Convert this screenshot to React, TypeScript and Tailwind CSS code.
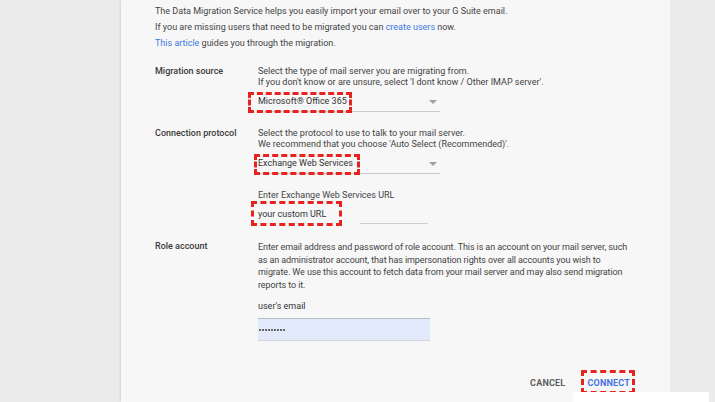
import React from 'react';

const font = { fontFamily: 'Roboto, "Liberation Sans", sans-serif' };

function RedBox({ className }: { className: string }) {
  return <span className={`pointer-events-none absolute border-[3px] border-dashed border-[#e8231f] ${className}`} />;
}

function Row({ label, children, className = '' }: { label: string; children: React.ReactNode; className?: string }) {
  return (
    <div className={`flex ${className}`}>
      <div className="w-[103px] shrink-0 font-medium text-[#3a3a3a] leading-[11px]">{label}</div>
      <div className="flex-1">{children}</div>
    </div>
  );
}

function Select({ value, box }: { value: string; box: string }) {
  return (
    <div className="relative flex h-[20px] w-[182px] items-center justify-between border-b border-[#c9c9c9] text-[#333]">
      <span className="leading-[11px]">{value}</span>
      <span className="mr-[3px] h-0 w-0 border-x-[4px] border-t-[4px] border-x-transparent border-t-[#a0a0a0]" />
      <RedBox className={box} />
    </div>
  );
}

export default function App() {
  return (
    <div className="relative flex h-[402px] w-[715px] overflow-hidden bg-[#ececec] text-[9px] text-[#444]" style={font}>
      <div className="w-[121px] shrink-0 bg-[#ebebeb]" />

      <div className="w-[549px] shrink-0 bg-[#f7f7f7] pl-[34px] pt-[3px] shadow-[0_0_3px_rgba(0,0,0,0.18)]">
        <p className="leading-[16px]">The Data Migration Service helps you easily import your email over to your G Suite email.</p>
        <p className="leading-[16px]">
          If you are missing users that need to be migrated you can <span className="text-[#3c79e6]">create users</span> now.
        </p>
        <p className="leading-[16px]">
          <span className="text-[#3c79e6]">This article</span> guides you through the migration.
        </p>

        <Row label="Migration source" className="mt-[15px]">
          <p className="leading-[11px]">Select the type of mail server you are migrating from.</p>
          <p className="leading-[11px]">If you don't know or are unsure, select 'I dont know / Other IMAP server'.</p>
          <div className="mt-[4px]">
            <Select value="Microsoft® Office 365" box="-left-[10px] top-0 h-[21px] w-[104px]" />
          </div>
        </Row>

        <Row label="Connection protocol" className="mt-[16px]">
          <p className="leading-[11px]">Select the protocol to use to talk to your mail server.</p>
          <p className="leading-[11px]">We recommend that you choose 'Auto Select (Recommended)'.</p>
          <div className="mt-[4px]">
            <Select value="Exchange Web Services" box="-left-[4px] top-0 h-[21px] w-[106px]" />
          </div>
          <p className="mt-[16px] leading-[11px]">Enter Exchange Web Services URL</p>
          <div className="relative mt-[4px] flex h-[19px] w-[170px] items-center text-[#333]">
            <span className="leading-[11px]">your custom URL</span>
            <span className="absolute bottom-0 left-[102px] h-px w-[68px] bg-[#cfcfcf]" />
            <RedBox className="-left-[7px] -top-[4px] h-[25px] w-[91px]" />
          </div>
        </Row>

        <Row label="Role account" className="mt-[17px]">
          <p className="leading-[12.5px] tracking-[-0.1px]">
            Enter email address and password of role account. This is an account on your mail server, such
            <br />
            as an administrator account, that has impersonation rights over all accounts you wish to
            <br />
            migrate. We use this account to fetch data from your mail server and may also send migration
            <br />
            reports to it.
          </p>
          <p className="mt-[10px] leading-[11px] text-[#333]">user's email</p>
          <div className="mt-[6px] flex h-[23px] w-[172px] items-center gap-[1px] border-y border-t-[#b9bdc7] border-b-[#d3d7df] bg-[#e2e9fb] pl-[1px]">
            {Array.from({ length: 9 }).map((_, i) => (
              <span key={i} className="h-[2px] w-[2px] rounded-full bg-[#3a3a3a]" />
            ))}
          </div>
        </Row>

        <div className="mt-[37px] flex justify-end gap-[22px] pr-[40px] text-[9px] font-bold leading-[11px] tracking-[0.2px]">
          <span className="text-[#5f5f5f]">CANCEL</span>
          <span className="relative text-[#4a72e3]">
            CONNECT
            <RedBox className="-left-[6px] -top-[8px] h-[24px] w-[54px]" />
          </span>
        </div>
      </div>

      <div className="flex-1 bg-[#ebebeb]" />

      <div className="absolute left-[573px] top-[392px] h-[10px] w-[136px] bg-white" />
    </div>
  );
}
